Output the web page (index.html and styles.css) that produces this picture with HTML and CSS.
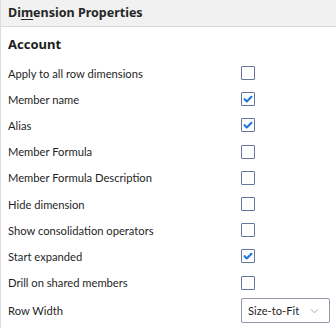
FILE: index.html
```html
<!DOCTYPE html>
<html lang="en">
<head>
    <meta charset="UTF-8">
    <title>Dimension Properties</title>
    <link rel="stylesheet" href="styles.css">
</head>
<body>
    <div class="panel">
        <header class="panel-head">Di<u>m</u>ension Properties</header>
        <h2 class="section-title">Account</h2>
        <ul class="props">
            <li><span>Apply to all row dimensions</span><span class="box"></span></li>
            <li><span>Member name</span><span class="box checked"><svg viewBox="0 0 14 14"><path d="M3 7.2l2.6 2.6L11 4.4"/></svg></span></li>
            <li><span>Alias</span><span class="box checked"><svg viewBox="0 0 14 14"><path d="M3 7.2l2.6 2.6L11 4.4"/></svg></span></li>
            <li><span>Member Formula</span><span class="box"></span></li>
            <li><span>Member Formula Description</span><span class="box"></span></li>
            <li><span>Hide dimension</span><span class="box"></span></li>
            <li><span>Show consolidation operators</span><span class="box"></span></li>
            <li><span>Start expanded</span><span class="box checked"><svg viewBox="0 0 14 14"><path d="M3 7.2l2.6 2.6L11 4.4"/></svg></span></li>
            <li><span>Drill on shared members</span><span class="box"></span></li>
            <li class="last">
                <span>Row Width</span>
                <div class="select">
                    <span>Size-to-Fit</span>
                    <svg viewBox="0 0 10 6"><path d="M1 1l4 4 4-4"/></svg>
                </div>
            </li>
        </ul>
    </div>
</body>
</html>
```

FILE: styles.css
```css
body {
    margin: 0;
    background: #fff;
    color: #1d1d1d;
    font-family: Lato, "Noto Sans", sans-serif;
}

.panel {
    border-left: 1px solid #dcdcdc;
    height: 328px;
    box-sizing: border-box;
}

.panel-head {
    height: 26px;
    line-height: 25px;
    padding-left: 7px;
    background: #f1f1f1;
    border-bottom: 1px solid #d9d9d9;
    font-family: "Noto Sans", sans-serif;
    font-weight: bold;
    font-size: 12.5px;
    color: #262626;
}

.panel-head u {
    text-underline-offset: 2px;
}

.section-title {
    margin: 0;
    padding: 8px 7px 0;
    height: 25px;
    font-family: "Noto Sans", sans-serif;
    font-size: 13px;
    font-weight: bold;
    line-height: 18px;
    color: #1d1d1d;
}

.props {
    list-style: none;
    margin: 0;
    padding: 0;
}

.props li {
    display: grid;
    grid-template-columns: 232px auto;
    align-items: center;
    height: 26.2px;
    padding-left: 7px;
    font-size: 11.2px;
    color: #1f1f1f;
}

.props li.last {
    height: 30px;
}

.box {
    width: 12px;
    height: 12px;
    border: 1px solid #67759a;
    border-radius: 1px;
    margin-left: 1px;
    display: flex;
}

.box svg {
    width: 12px;
    height: 12px;
}

.box svg path {
    fill: none;
    stroke: #1f78e0;
    stroke-width: 2.5;
    stroke-linecap: round;
    stroke-linejoin: round;
}

.select {
    width: 89px;
    height: 25px;
    border: 1px solid #8f97a8;
    border-radius: 2px;
    display: flex;
    align-items: center;
    justify-content: space-between;
    padding: 0 10px 0 6px;
    box-sizing: border-box;
    margin-left: 1px;
    font-size: 11.2px;
}

.select svg {
    width: 9px;
    height: 6px;
}

.select svg path {
    fill: none;
    stroke: #9aa0ab;
    stroke-width: 1;
}
```
